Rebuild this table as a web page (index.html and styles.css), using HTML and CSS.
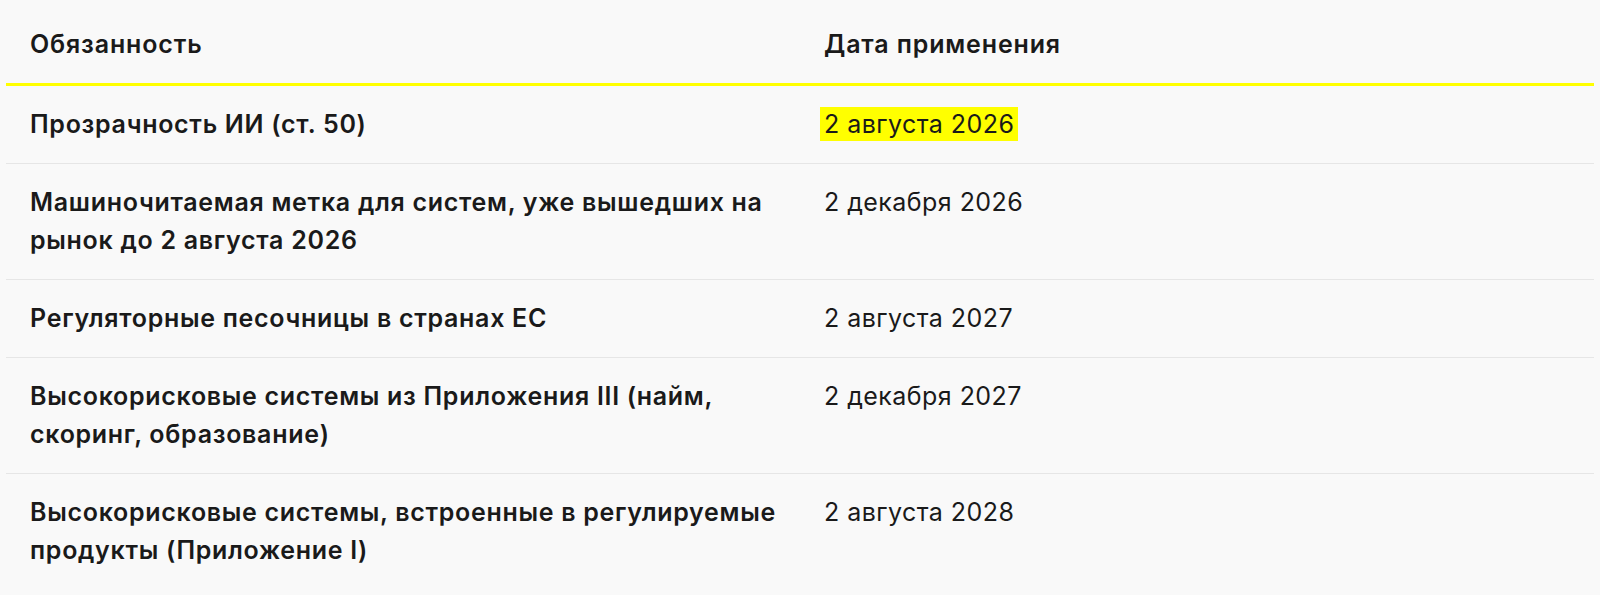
FILE: index.html
```html
<!DOCTYPE html>
<html lang="ru">
<head>
<meta charset="utf-8">
<title>Сроки применения</title>
<link rel="stylesheet" href="styles.css">
</head>
<body>
<div class="wrap">
  <table class="duties">
    <thead>
      <tr>
        <th>Обязанность</th>
        <th>Дата применения</th>
      </tr>
    </thead>
    <tbody>
      <tr>
        <td class="duty">Прозрачность ИИ (ст. 50)</td>
        <td class="date"><mark class="hl">2 августа 2026</mark></td>
      </tr>
      <tr>
        <td class="duty">Машиночитаемая метка для систем, уже вышедших на рынок до 2 августа 2026</td>
        <td class="date">2 декабря 2026</td>
      </tr>
      <tr>
        <td class="duty">Регуляторные песочницы в странах ЕС</td>
        <td class="date">2 августа 2027</td>
      </tr>
      <tr>
        <td class="duty">Высокорисковые системы из Приложения III (найм, скоринг, образование)</td>
        <td class="date">2 декабря 2027</td>
      </tr>
      <tr>
        <td class="duty">Высокорисковые системы, встроенные в регулируемые продукты (Приложение I)</td>
        <td class="date">2 августа 2028</td>
      </tr>
    </tbody>
  </table>
</div>
</body>
</html>
```
FILE: styles.css
```css
html, body {
  margin: 0;
  padding: 0;
  background: #f9f9f9;
}
body {
  font-family: Inter, "Noto Sans", "Liberation Sans", sans-serif;
  color: #1a1a1a;
}
.wrap {
  padding: 6px;
}
.duties {
  width: 100%;
  border-collapse: collapse;
  table-layout: fixed;
  font-size: 25px;
  line-height: 38px;
}
.duties th,
.duties td {
  text-align: left;
  vertical-align: top;
  padding: 19px 16px 20px 24px;
}
.duties th {
  font-weight: 600;
  letter-spacing: 0.85px;
  border-bottom: 3px solid #ffff00;
}
.duties tbody tr {
  border-bottom: 1px solid #e6e6e6;
}
.duties tbody tr:last-child {
  border-bottom: none;
}
.duty {
  font-weight: 600;
  letter-spacing: 0.7px;
}
.date {
  font-weight: 400;
  letter-spacing: 0.45px;
}
.hl {
  background: #ffff00;
  color: inherit;
  padding: 2px 4px;
  margin-left: -4px;
}
```
